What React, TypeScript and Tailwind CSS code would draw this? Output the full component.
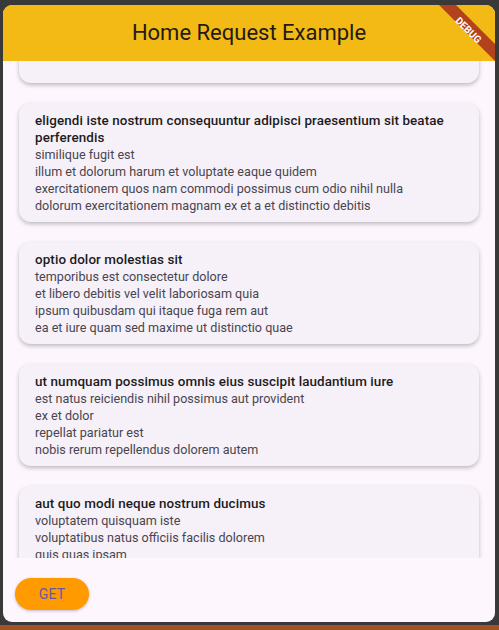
import React from "react";

const posts = [
  {
    title: "eligendi iste nostrum consequuntur adipisci praesentium sit beatae perferendis",
    body: "similique fugit est\nillum et dolorum harum et voluptate eaque quidem\nexercitationem quos nam commodi possimus cum odio nihil nulla\ndolorum exercitationem magnam ex et a et distinctio debitis",
  },
  {
    title: "optio dolor molestias sit",
    body: "temporibus est consectetur dolore\net libero debitis vel velit laboriosam quia\nipsum quibusdam qui itaque fuga rem aut\nea et iure quam sed maxime ut distinctio quae",
  },
  {
    title: "ut numquam possimus omnis eius suscipit laudantium iure",
    body: "est natus reiciendis nihil possimus aut provident\nex et dolor\nrepellat pariatur est\nnobis rerum repellendus dolorem autem",
  },
  {
    title: "aut quo modi neque nostrum ducimus",
    body: "voluptatem quisquam iste\nvoluptatibus natus officiis facilis dolorem\nquis quas ipsam\nvel et voluptatum in aliquid",
  },
];

function PostCard({ title, body }: { title: string; body: string }) {
  return (
    <div className="bg-[#f6f1f8] rounded-xl shadow-[0_2px_4px_rgba(0,0,0,0.25)] px-4 pt-[9px] pb-[8px] leading-[17px]">
      <div className="font-medium text-[13.4px] tracking-[0.1px] text-[#1d1b20]">{title}</div>
      <div className="text-[12.6px] text-[#49454f] whitespace-pre-line">{body}</div>
    </div>
  );
}

function DebugBanner() {
  return (
    <svg width="56" height="56" viewBox="0 0 56 56" className="absolute top-0 right-0 pointer-events-none">
      <polygon points="0,0 17,0 56,39 56,56" fill="#b2421d" />
      <text
        x="0"
        y="0"
        transform="translate(29.5 25) rotate(45)"
        textAnchor="middle"
        dominantBaseline="central"
        fill="#ffffff"
        fontSize="10"
        fontWeight="700"
        fontFamily="Roboto, 'Liberation Sans', sans-serif"
      >
        DEBUG
      </text>
    </svg>
  );
}

export default function App() {
  return (
    <div className="h-[630px] w-[499px] bg-[#393939] flex flex-col" style={{ fontFamily: "Roboto, 'Liberation Sans', sans-serif" }}>
      <div className="mt-[5px] ml-[3px] w-[492px] h-[617px] rounded-[9px] overflow-hidden bg-[#fdf7fd] flex flex-col relative">
        {/* App bar */}
        <header className="h-[56px] shrink-0 bg-[#f3b915] flex items-center justify-center">
          <h1 className="text-[22px] text-[#1f1c17] leading-none">Home Request Example</h1>
        </header>

        {/* List */}
        <div className="h-[497px] shrink-0 overflow-hidden">
          <div className="px-4 -mt-[80px] flex flex-col gap-[20px]">
            <div className="h-[102px] shrink-0 bg-[#f6f1f8] rounded-xl shadow-[0_2px_4px_rgba(0,0,0,0.25)]"></div>
            {posts.map((p) => (
              <PostCard key={p.title} title={p.title} body={p.body} />
            ))}
          </div>
        </div>

        {/* Bottom */}
        <div className="flex-1 flex items-center pl-3">
          <button className="mt-[8px] w-[74px] h-[32px] rounded-full bg-[#ff9a00] text-[#6a56a8] text-[14px] tracking-[0.2px] shadow-[0_1px_3px_rgba(0,0,0,0.25)]">
            GET
          </button>
        </div>

        <DebugBanner />
      </div>
      <div className="mt-auto h-[5px] bg-[#a5522a]"></div>
    </div>
  );
}
